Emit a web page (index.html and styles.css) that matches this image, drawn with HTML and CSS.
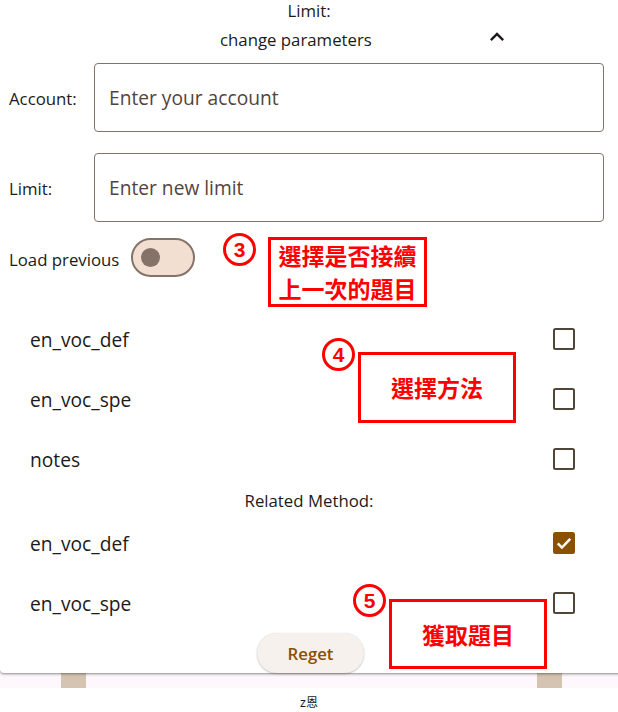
FILE: index.html
```html
<!DOCTYPE html>
<html lang="zh-Hant">
<head>
<meta charset="utf-8">
<title>Limit</title>
<link rel="stylesheet" href="styles.css">
</head>
<body>
<div class="card">
  <div class="title">Limit:</div>
  <div class="expander">
    <span class="expander-text">change parameters</span>
    <svg class="chevron" viewBox="0 0 24 24" width="28" height="28"><path d="M12 8l-6 6 1.41 1.41L12 10.83l4.59 4.58L18 14z" fill="#201a17"/></svg>
  </div>
  <div class="field-row">
    <label class="field-label">Account:</label>
    <input class="field-input" placeholder="Enter your account">
  </div>
  <div class="field-row second">
    <label class="field-label">Limit:</label>
    <input class="field-input" placeholder="Enter new limit">
  </div>
  <div class="toggle-row">
    <span class="toggle-label">Load previous</span>
    <div class="switch"><div class="thumb"></div></div>
  </div>
  <div class="list first-list">
    <div class="row"><span>en_voc_def</span><span class="box"></span></div>
    <div class="row"><span>en_voc_spe</span><span class="box"></span></div>
    <div class="row"><span>notes</span><span class="box"></span></div>
  </div>
  <div class="section-label">Related Method:</div>
  <div class="list">
    <div class="row"><span>en_voc_def</span><span class="box checked"><svg viewBox="0 0 24 24" width="20" height="20"><path d="M4.5 12.5l5 5L19.5 7" fill="none" stroke="#fff" stroke-width="3"/></svg></span></div>
    <div class="row"><span>en_voc_spe</span><span class="box"></span></div>
  </div>
  <div class="actions"><button class="reget">Reget</button></div>
</div>
<div class="band"><div class="tab"></div><div class="tab"></div></div>
<div class="signature">z恩</div>

<div class="anno-circle c3">3</div>
<div class="anno-box b3">選擇是否接續<br>上一次的題目</div>
<div class="anno-circle c4">4</div>
<div class="anno-box b4">選擇方法</div>
<div class="anno-circle c5">5</div>
<div class="anno-box b5">獲取題目</div>
</body>
</html>
```
FILE: styles.css
```css
html, body {
  margin: 0;
  padding: 0;
}
body {
  position: relative;
  width: 618px;
  height: 712px;
  overflow: hidden;
  background: #ffffff;
  font-family: "Open Sans", "Noto Sans", sans-serif;
  color: #201a17;
}
.card {
  background: #ffffff;
  margin-right: -12px;
  height: 673px;
  border-radius: 0 0 4px 4px;
  box-shadow: 0 1px 2px rgba(0,0,0,0.3), 0 1px 3px 1px rgba(0,0,0,0.12);
  position: relative;
  z-index: 1;
}
.title {
  height: 22px;
  line-height: 22px;
  font-size: 16.8px;
  text-align: center;
  padding-right: 12px;
}
.expander {
  height: 34px;
  display: flex;
  align-items: center;
  padding-left: 220px;
  gap: 111px;
  font-size: 16.8px;
}
.chevron {
  display: block;
  margin-top: -4px;
}
.field-row {
  display: flex;
  align-items: center;
  margin-top: 7px;
  padding-left: 9px;
}
.field-row.second {
  margin-top: 21px;
}
.field-label {
  width: 85px;
  font-size: 16.8px;
  padding-top: 2px;
}
.field-input {
  box-sizing: border-box;
  width: 510px;
  height: 69px;
  border: 1px solid #85736a;
  border-radius: 4px;
  padding: 0 14px;
  font-family: "Open Sans", "Noto Sans", sans-serif;
  font-size: 19.2px;
  color: #201a17;
  background: transparent;
  outline: none;
}
.field-input::placeholder {
  color: #52443c;
}
.toggle-row {
  display: flex;
  align-items: center;
  margin-top: 16px;
  padding-left: 9px;
  gap: 12px;
  font-size: 16.8px;
}
.toggle-label {
  padding-top: 4px;
}
.switch {
  box-sizing: border-box;
  width: 64px;
  height: 39px;
  border: 2px solid #85736a;
  border-radius: 20px;
  background: #f3dfd1;
  display: flex;
  align-items: center;
  padding-left: 8px;
}
.thumb {
  width: 19px;
  height: 19px;
  border-radius: 50%;
  background: #85736a;
}
.list.first-list {
  margin-top: 32px;
}
.row {
  height: 60px;
  display: flex;
  align-items: center;
  justify-content: space-between;
  padding-left: 30px;
  padding-right: 55px;
  font-size: 19.2px;
}
.box {
  box-sizing: border-box;
  width: 22px;
  height: 22px;
  border: 2.4px solid #4f4539;
  border-radius: 2.5px;
  display: flex;
  align-items: center;
  justify-content: center;
}
.box.checked {
  background: #8b5000;
  border-color: #8b5000;
}
.box.checked svg {
  display: block;
  flex: none;
}
.section-label {
  height: 24px;
  line-height: 24px;
  font-size: 16.8px;
  text-align: center;
  padding-right: 12px;
}
.actions {
  display: flex;
  justify-content: center;
  padding-right: 12px;
}
.reget {
  width: 107px;
  height: 40px;
  border: none;
  border-radius: 20px;
  background: #f7f1ee;
  box-shadow: 0 1px 2px rgba(0,0,0,0.2), 0 0 1px rgba(0,0,0,0.15);
  color: #8b5000;
  font-family: "Open Sans", "Noto Sans", sans-serif;
  font-size: 16.8px;
  font-weight: 600;
  padding: 0;
  margin-left: 3px;
}
.band {
  height: 15px;
  background: #fef7fb;
  display: flex;
  justify-content: space-between;
  padding: 0 56px 0 61px;
}
.tab {
  width: 25px;
  height: 15px;
  background: #d6c4b3;
}
.signature {
  padding-top: 7px;
  line-height: 16px;
  font-size: 12px;
  text-align: center;
  font-family: "Liberation Sans", "Noto Sans CJK TC", sans-serif;
  color: #1a1a1a;
}
.anno-circle {
  position: absolute;
  z-index: 5;
  box-sizing: border-box;
  width: 33px;
  height: 33px;
  border: 3px solid #ff0000;
  border-radius: 50%;
  color: #ff0000;
  font-family: "Liberation Sans", Arial, sans-serif;
  font-weight: bold;
  font-size: 21px;
  line-height: 27px;
  text-align: center;
  background: #ffffff;
}
.c3 { left: 223px; top: 233px; }
.c4 { left: 322px; top: 338px; }
.c5 { left: 353px; top: 584px; }
.anno-box {
  position: absolute;
  z-index: 5;
  box-sizing: border-box;
  border: 3px solid #ff0000;
  background: #ffffff;
  color: #ff0000;
  font-family: "Noto Sans CJK TC", "Noto Sans CJK SC", sans-serif;
  font-weight: bold;
  font-size: 23px;
  line-height: 33px;
  display: flex;
  align-items: center;
  justify-content: center;
  text-align: center;
}
.b3 { left: 268px; top: 237px; width: 159px; height: 70px; }
.b4 { left: 358px; top: 352px; width: 158px; height: 71px; }
.b5 { left: 389px; top: 599px; width: 158px; height: 70px; }
```
